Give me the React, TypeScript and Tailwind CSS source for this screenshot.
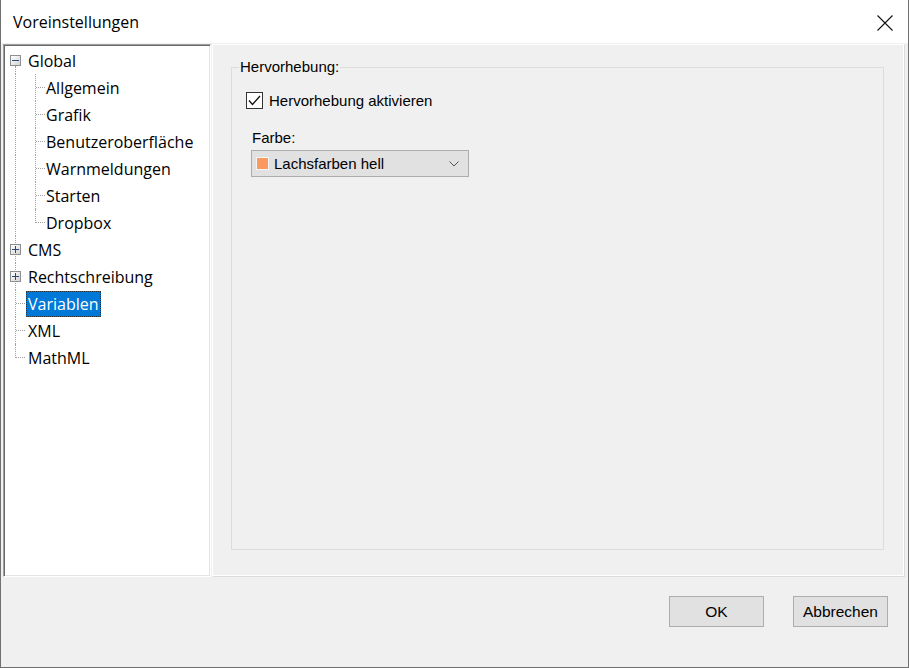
import React from "react"

type Node = {
  label: string
  child?: boolean
  box?: "plus" | "minus"
  selected?: boolean
  last?: boolean
  lastChild?: boolean
}

const tree: Node[] = [
  { label: "Global", box: "minus" },
  { label: "Allgemein", child: true },
  { label: "Grafik", child: true },
  { label: "Benutzeroberfläche", child: true },
  { label: "Warnmeldungen", child: true },
  { label: "Starten", child: true },
  { label: "Dropbox", child: true, lastChild: true },
  { label: "CMS", box: "plus" },
  { label: "Rechtschreibung", box: "plus" },
  { label: "Variablen", selected: true },
  { label: "XML" },
  { label: "MathML", last: true },
]

const dot = "absolute border-dotted border-[#a0a0a0]"

function ExpandBox({ kind }: { kind: "plus" | "minus" }) {
  return (
    <span className="absolute left-[5px] top-[8px] flex h-[11px] w-[11px] items-center justify-center border border-[#8e8f8f] bg-linear-to-br from-white to-[#d4d4d4]">
      <span className="absolute h-[1px] w-[7px] bg-[#30467f]" />
      {kind === "plus" && <span className="absolute h-[7px] w-[1px] bg-[#30467f]" />}
    </span>
  )
}

function TreeRow({ node }: { node: Node }) {
  return (
    <div className="relative flex h-[27px] items-center">
      {/* parent line */}
      {node.box === "minus" && <span className={`${dot} left-[10px] top-[19px] bottom-0 border-l`} />}
      {!node.box && !node.last && <span className={`${dot} left-[10px] top-0 bottom-0 border-l`} />}
      {node.box === "plus" && <span className={`${dot} left-[10px] top-0 bottom-0 border-l`} />}
      {node.last && <span className={`${dot} left-[10px] top-0 h-[14px] border-l`} />}
      {!node.child && !node.box && <span className={`${dot} left-[11px] top-[13px] w-[9px] border-t`} />}
      {/* child line */}
      {node.child && (
        <>
          <span className={`${dot} left-[30px] top-0 border-l ${node.lastChild ? "h-[14px]" : "bottom-0"}`} />
          <span className={`${dot} left-[31px] top-[13px] w-[9px] border-t`} />
        </>
      )}
      {node.box && <ExpandBox kind={node.box} />}
      <span
        className={`${node.child ? "ml-[39px]" : "ml-[21px]"} h-[26px] px-[2px] leading-[26px] ${
          node.selected
            ? "bg-[#0078d7] text-white outline-1 outline-dotted outline-offset-[-1px] outline-[#333]"
            : "text-black"
        }`}
      >
        {node.label}
      </span>
    </div>
  )
}

function WinButton({ label }: { label: string }) {
  return (
    <button className="h-[31px] w-[95px] border border-[#adadad] bg-[#e1e1e1] text-[15.5px] text-black">
      {label}
    </button>
  )
}

export default function App() {
  return (
    <div className="flex h-[668px] w-[909px] flex-col border-x border-b border-[#707070] bg-[#f0f0f0]">
      <div className="flex h-[43px] shrink-0 items-center justify-between bg-white pl-[12px] pr-[15px] pt-[1px] font-['Open_Sans',sans-serif] text-[16px] text-black">
        <span>Voreinstellungen</span>
        <svg width="16" height="16" viewBox="0 0 16 16" className="mt-[1px]">
          <path d="M0.5 0.5 L15.5 15.5 M15.5 0.5 L0.5 15.5" stroke="#111" strokeWidth="1.1" fill="none" />
        </svg>
      </div>

      <div className="flex h-[534px] shrink-0 gap-[1px] pl-[2px] pt-[1px]">
        <div className="h-[533px] w-[208px] border border-t-[#a0a0a0] border-l-[#a0a0a0] border-r-white border-b-white bg-white pt-[1px] font-['Open_Sans',sans-serif] text-[16px] shadow-[inset_1px_1px_0_#696969,inset_-1px_-1px_0_#e3e3e3]">
          <div className="pl-[1px] pt-[1px]">
            {tree.map((n) => (
              <TreeRow key={n.label} node={n} />
            ))}
          </div>
        </div>

        <div className="flex h-[533px] w-[693px] flex-col border border-t-white border-l-white border-r-[#dcdcdc] border-b-[#dcdcdc] pl-[18px] font-['Liberation_Sans',Arial,sans-serif] text-[15px] text-black shadow-[inset_-1px_-1px_0_white]">
          <fieldset className="mt-[13px] h-[492px] w-[653px] border border-[#dcdcdc]">
            <legend className="ml-[7px] px-[1px] leading-[18px]">Hervorhebung:</legend>
            <div className="ml-[14px] mt-[16px] flex items-center gap-[6px]">
              <span className="flex h-[17px] w-[17px] items-center justify-center border border-[#333] bg-white">
                <svg width="13" height="11" viewBox="0 0 13 11">
                  <path d="M1 5.5 L4.5 9.5 L12 1" stroke="#111" strokeWidth="1.3" fill="none" />
                </svg>
              </span>
              <span className="leading-[17px]">Hervorhebung aktivieren</span>
            </div>
            <div className="ml-[19px] mt-[20px]">
              <div className="pl-[1px] leading-[17px]">Farbe:</div>
              <div className="mt-[4px] flex h-[27px] w-[218px] items-center border border-[#adadad] bg-[#e1e1e1] pl-[4px] pr-[9px]">
                <span className="h-[13px] w-[13px] border border-[#f4f4f4] bg-[#fb9a60]" />
                <span className="ml-[5px] flex-1 leading-[17px]">Lachsfarben hell</span>
                <svg width="10" height="6" viewBox="0 0 10 6">
                  <path d="M0.5 0.5 L5 5 L9.5 0.5" stroke="#555" strokeWidth="1" fill="none" />
                </svg>
              </div>
            </div>
          </fieldset>
        </div>
      </div>

      <div className="flex flex-1 items-start justify-end gap-[29px] pr-[20px] pt-[19px] font-['Liberation_Sans',Arial,sans-serif]">
        <WinButton label="OK" />
        <WinButton label="Abbrechen" />
      </div>
    </div>
  )
}
